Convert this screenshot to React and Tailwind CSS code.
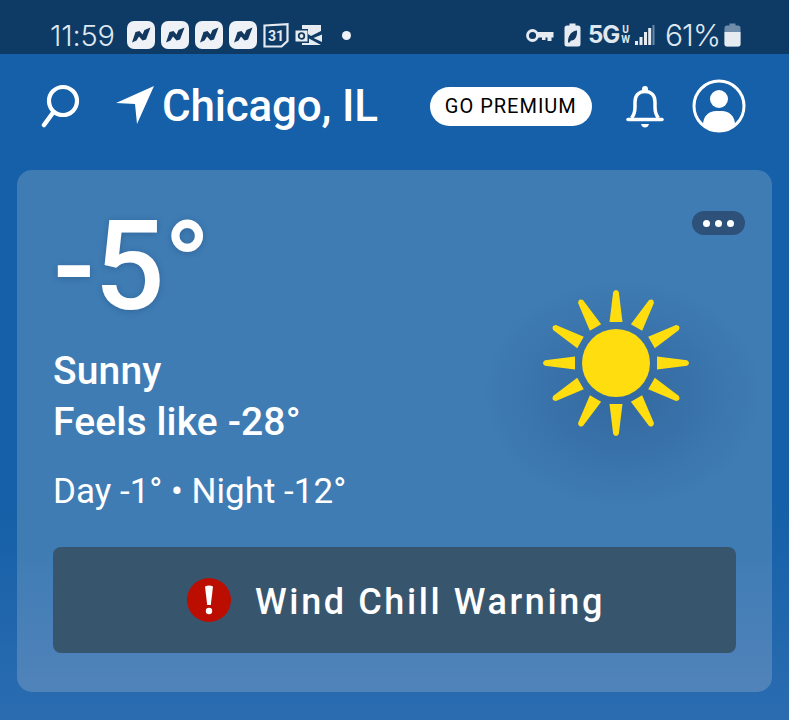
import React from 'react';

const rays = [0, 30, 60, 90, 120, 150, 180, 210, 240, 270, 300, 330];

const NewsIcon = () => (
  <div className="w-[28px] h-[28px] rounded-[7px] bg-[#eef1f5] flex items-center justify-center">
    <svg width="22" height="22" viewBox="0 0 22 22">
      <path d="M2 18.5 L5.5 8 L9.5 7 L12.5 10.5 L14.5 6 L20.5 3.5 L16 15.5 L12.5 16.5 L9 12.5 L6.5 16.5 Z" fill="#12385f" />
    </svg>
  </div>
);

const CalendarIcon = () => (
  <div className="relative w-[26px] h-[25px]">
    <svg width="26" height="25" viewBox="0 0 26 25" className="absolute inset-0">
      <path d="M1.5 2.5 L24.5 1.2 V18 L18.5 23.5 H1.5 Z" fill="none" stroke="#e6ebf1" strokeWidth="2.2" />
    </svg>
    <span className="absolute left-[5px] top-[5px] text-[14px] leading-[16px] font-bold text-[#e6ebf1]">31</span>
  </div>
);

const OutlookIcon = () => (
  <svg width="28" height="22" viewBox="0 0 28 22">
    <path d="M7 1 H26 V7 L16 12 L13 10 V5 H7 Z" fill="#e6ebf1" />
    <path d="M27 10.5 L18.5 14 L27 18 Z" fill="#e6ebf1" />
    <path d="M14 14.5 L26 21 H7 V19 H14 Z" fill="#e6ebf1" />
    <rect x="0.5" y="6.5" width="12" height="11" fill="#e6ebf1" />
    <circle cx="6.5" cy="12" r="2.8" fill="none" stroke="#12385f" strokeWidth="1.8" />
  </svg>
);

const KeyIcon = () => (
  <svg width="28" height="15" viewBox="0 0 28 15">
    <circle cx="6.5" cy="7.5" r="5" fill="none" stroke="#e6ebf1" strokeWidth="2.8" />
    <path d="M11 4 H27.5 V9.5 H25.5 V13 H21.5 V9.5 H19.5 V12 H16 V9.5 H11 Z" fill="#e6ebf1" />
  </svg>
);

const LeafBattery = () => (
  <svg width="17" height="24" viewBox="0 0 17 24">
    <path d="M5.5 0.5 H11.5 V2.5 H14 Q16.5 2.5 16.5 5 V21 Q16.5 23.5 14 23.5 H3 Q0.5 23.5 0.5 21 V5 Q0.5 2.5 3 2.5 H5.5 Z" fill="#e6ebf1" />
    <path d="M4 19 C4 12 8 8 13 7.5 C13.5 13 11 18 7 17.5 L5 20 Z" fill="#12385f" />
  </svg>
);

const SignalIcon = () => (
  <svg width="20" height="22" viewBox="0 0 20 22">
    <rect x="0" y="17" width="3" height="4" fill="#e6ebf1" />
    <rect x="4.5" y="13" width="3" height="8" fill="#e6ebf1" />
    <rect x="9" y="8" width="3" height="13" fill="#e6ebf1" />
    <rect x="13.2" y="4" width="3" height="17" fill="#e6ebf1" />
    <rect x="17.5" y="1" width="2" height="20" fill="#6c89a8" />
  </svg>
);

const BatteryIcon = () => (
  <svg width="17" height="24" viewBox="0 0 17 24">
    <path d="M5.5 0.5 H11.5 V2.5 H14 Q16.5 2.5 16.5 5 V21 Q16.5 23.5 14 23.5 H3 Q0.5 23.5 0.5 21 V5 Q0.5 2.5 3 2.5 H5.5 Z" fill="#6f8dab" />
    <path d="M0.5 9 H16.5 V21 Q16.5 23.5 14 23.5 H3 Q0.5 23.5 0.5 21 Z" fill="#e6ebf1" />
  </svg>
);

const StatusBar = () => (
  <div className="h-[54px] bg-[#0e3a66] flex items-center justify-between pt-[16px] pl-[50px] pr-[48px] text-[#dfe7ef]">
    <div className="flex items-center">
      <span className="w-[77px] text-[29px] leading-none font-['Inter',sans-serif] font-light tracking-[-0.2px]">11:59</span>
      <div className="flex items-center gap-[6px]">
        <NewsIcon />
        <NewsIcon />
        <NewsIcon />
        <NewsIcon />
        <CalendarIcon />
        <OutlookIcon />
      </div>
      <div className="w-[9px] h-[9px] rounded-full bg-[#eef1f5] ml-[19px]" />
    </div>
    <div className="flex items-center">
      <KeyIcon />
      <div className="ml-[10px]"><LeafBattery /></div>
      <span className="ml-[7px] text-[24px] font-bold leading-none font-['Inter',sans-serif] tracking-[-1px]">5G</span>
      <div className="ml-[2px] flex flex-col items-center text-[10px] font-bold leading-[10px]">
        <span>U</span>
        <span>W</span>
      </div>
      <div className="ml-[5px]"><SignalIcon /></div>
      <span className="ml-[10px] text-[30px] leading-none font-['Inter',sans-serif] font-light tracking-[-1px]">61%</span>
      <div className="ml-[4px]"><BatteryIcon /></div>
    </div>
  </div>
);

const Header = () => (
  <div className="h-[104px] mb-[12px] flex items-center pl-[41px] text-white">
    <svg width="40" height="46" viewBox="0 0 40 46" className="mr-[35px] shrink-0">
      <circle cx="22" cy="18" r="14" fill="none" stroke="white" strokeWidth="4.2" />
      <path d="M12.5 29 L3 42" stroke="white" strokeWidth="4.5" strokeLinecap="round" />
    </svg>
    <svg width="40" height="42" viewBox="0 0 40 42" className="mr-[6px] shrink-0">
      <path d="M0 18 L38 1 L21 39 L19 19 Z" fill="white" />
    </svg>
    <span className="text-[44px] font-medium leading-none tracking-[-0.2px] whitespace-nowrap">Chicago, IL</span>
    <div className="ml-[52px] h-[39px] w-[162px] shrink-0 rounded-full bg-white flex items-center justify-center text-black text-[20px] tracking-[1px]">
      GO PREMIUM
    </div>
    <svg width="38" height="46" viewBox="0 0 38 46" className="ml-[34px] shrink-0">
      <path d="M5.5 35 C8 32 9 30 9 24 V19 C9 12.5 13 8.5 19 8.5 C25 8.5 29 12.5 29 19 V24 C29 30 30 32 32.5 35" fill="none" stroke="white" strokeWidth="3.5" />
      <path d="M2 36.5 H36" stroke="white" strokeWidth="3.5" strokeLinecap="round" />
      <circle cx="19" cy="6" r="3" fill="white" />
      <path d="M15 41 H23 Q22 44.5 19 44.5 Q16 44.5 15 41 Z" fill="white" />
    </svg>
    <svg width="54" height="54" viewBox="0 0 54 54" className="ml-[28px] shrink-0">
      <circle cx="27" cy="27" r="25" fill="none" stroke="white" strokeWidth="3" />
      <circle cx="27" cy="20" r="9" fill="white" />
      <path d="M11 46 C11 37 17 32 24 32 H30 C37 32 43 37 43 46 C38 50 32 52 27 52 C21 52 16 50 11 46 Z" fill="white" />
    </svg>
  </div>
);

const Sun = () => (
  <div className="relative">
    <div className="absolute left-[-60px] top-[-10px] w-[280px] h-[230px] rounded-full bg-[radial-gradient(closest-side,rgba(45,95,150,0.7),rgba(45,95,150,0))]" />
    <svg width="148" height="148" viewBox="-74 -74 148 148" className="relative">
      <circle r="34" fill="#ffdd0f" />
      {rays.map((deg) => (
        <path
          key={deg}
          d="M-6.5 -41 L6.5 -41 L2.8 -71 Q0 -75 -2.8 -71 Z"
          fill="#ffdd0f"
          transform={`rotate(${deg})`}
        />
      ))}
    </svg>
  </div>
);

const WeatherCard = () => (
  <div className="mx-[17px] h-[522px] rounded-[15px] bg-[linear-gradient(180deg,#3f7cb4_0%,#3f7cb4_72%,#5083ba_100%)] pl-[36px] pr-[36px] text-white flex flex-col">
    <div className="flex-1 flex justify-between">
      <div className="flex flex-col">
        <div className="mt-[35px] text-[124px] leading-[124px] font-medium tracking-[-1px] [text-shadow:0_1px_6px_rgba(20,60,100,0.35)]">-5°</div>
        <div className="mt-[17px] text-[39px] leading-[51px] font-medium tracking-[0.15px]">Sunny</div>
        <div className="text-[39px] leading-[51px] font-medium tracking-[0.15px]">Feels like -28°</div>
        <div className="mt-[19px] text-[35px] leading-[50px]">Day -1° • Night -12°</div>
      </div>
      <div className="flex flex-col items-end">
        <div className="mt-[41px] mr-[-9px] w-[53px] h-[24px] rounded-full bg-[#2d5178] flex items-center justify-center gap-[5px]">
          <div className="w-[7px] h-[7px] rounded-full bg-white" />
          <div className="w-[7px] h-[7px] rounded-full bg-white" />
          <div className="w-[7px] h-[7px] rounded-full bg-white" />
        </div>
        <div className="mt-[54px] mr-[46px]">
          <Sun />
        </div>
      </div>
    </div>
    <div className="mb-[39px] h-[106px] rounded-[8px] bg-[#38556e] flex items-center justify-center gap-[24px] pl-[3px]">
      <div className="w-[44px] h-[44px] rounded-full bg-[#bb0d00] flex items-center justify-center">
        <svg width="12" height="30" viewBox="0 0 12 30">
          <path d="M2 1.5 Q6 -0.5 10 1.5 L7.8 20 H4.2 Z" fill="white" />
          <circle cx="6" cy="26" r="3.2" fill="white" />
        </svg>
      </div>
      <span className="pt-[3px] text-[36px] font-medium leading-none tracking-[2.6px]">Wind Chill Warning</span>
    </div>
  </div>
);

const App = () => (
  <div className="w-[789px] h-[720px] overflow-hidden bg-[linear-gradient(180deg,#1560a8_0%,#1560a8_70%,#2b6cb0_100%)] font-['Roboto',sans-serif]">
    <StatusBar />
    <Header />
    <WeatherCard />
  </div>
);

export default App;
